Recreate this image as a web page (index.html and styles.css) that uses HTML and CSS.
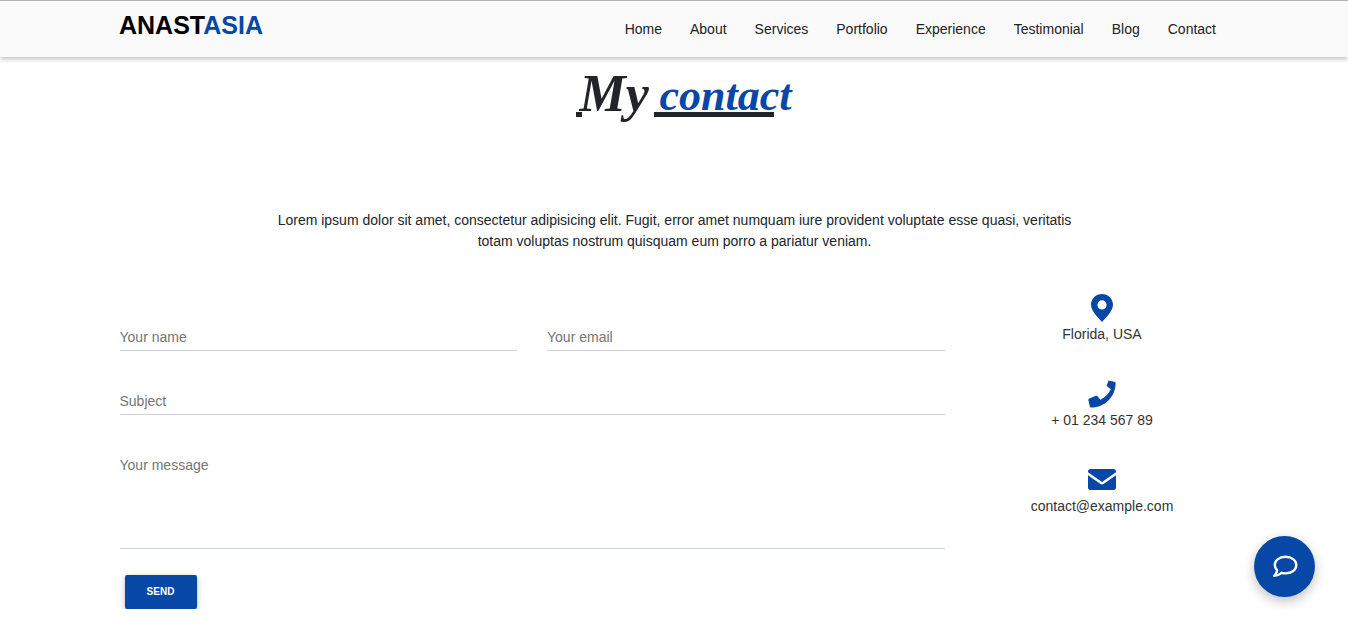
FILE: index.html
```html
<!DOCTYPE html>
<html lang="en">
<head>
    <meta charset="UTF-8">
    <meta name="viewport" content="width=device-width, initial-scale=1.0">
    <title>Contact</title>
    <link rel="stylesheet" href="styles.css">
</head>
<body>
    <header class="navbar">
        <div class="container navbar-inner">
            <a class="logo" href="#">ANAST<span>ASIA</span></a>
            <ul class="nav-list">
                <li><a href="#">Home</a></li>
                <li><a href="#">About</a></li>
                <li><a href="#">Services</a></li>
                <li><a href="#">Portfolio</a></li>
                <li><a href="#">Experience</a></li>
                <li><a href="#">Testimonial</a></li>
                <li><a href="#">Blog</a></li>
                <li><a href="#">Contact</a></li>
            </ul>
        </div>
    </header>

    <section class="contact">
        <h2 class="title"><span class="title-mark"></span><span class="title-my">My</span> <span class="title-em">contact</span></h2>
        <p class="intro">Lorem ipsum dolor sit amet, consectetur adipisicing elit. Fugit, error amet numquam iure provident voluptate esse quasi, veritatis totam voluptas nostrum quisquam eum porro a pariatur veniam.</p>

        <div class="container contact-row">
            <form class="contact-form">
                <div class="form-row">
                    <input class="field" type="text" placeholder="Your name">
                    <input class="field" type="text" placeholder="Your email">
                </div>
                <input class="field" type="text" placeholder="Subject">
                <textarea class="field field-message" placeholder="Your message"></textarea>
                <button class="btn-send" type="button">SEND</button>
            </form>

            <ul class="contact-info">
                <li>
                    <svg class="icon" width="22" height="28" viewBox="0 0 22 28"><path fill-rule="evenodd" d="M11 0C5 0 0 4.700 0 10.600 0 17 6.500 23 11 28c4.500-5 11-11 11-17.400C22 4.700 17 0 11 0zm0 6.300a4.600 4.600 0 1 1 0 9.200 4.600 4.600 0 0 1 0-9.200z"/></svg>
                    <span>Florida, USA</span>
                </li>
                <li>
                    <svg class="icon" width="28" height="28" viewBox="0 0 28 28"><path d="M20.300.4l6.100 1.400c.7.200 1.200.8 1.200 1.500C27.600 16.700 16.700 27.600 3.300 27.600c-.7 0-1.300-.5-1.500-1.200L.4 20.300c-.2-.7.200-1.400.9-1.700l6.500-2.800c.6-.2 1.300-.1 1.700.4l2.900 3.500c4.500-2.200 8.200-5.900 10.400-10.400l-3.500-2.900c-.5-.4-.7-1.100-.4-1.700l2.800-6.500c.3-.7 1-1.100 1.600-.8z"/></svg>
                    <span>+ 01 234 567 89</span>
                </li>
                <li>
                    <svg class="icon icon-mail" width="28" height="21" viewBox="0 0 28 21"><path d="M2.600 0h22.800C26.800 0 28 1.200 28 2.600v.7L14 13 0 3.300v-.7C0 1.200 1.200 0 2.600 0zM0 6.300l12.500 8.700c.9.600 2.100.6 3 0L28 6.300v12.100c0 1.400-1.200 2.600-2.600 2.600H2.600C1.200 21 0 19.800 0 18.400z"/></svg>
                    <span>contact@example.com</span>
                </li>
            </ul>
        </div>
    </section>

    <a class="chat-btn" href="#">
        <svg width="28" height="26" viewBox="0 0 26 24" fill="none" stroke="#fff" stroke-width="2.200" stroke-linejoin="round"><path d="M13.500 2.500c5.800 0 10 3.300 10 7.700s-4.200 7.700-10 7.700c-1.300 0-2.600-.2-3.700-.5-1.500 1.300-3.700 2.600-6.800 2.800 1.300-1.300 2.400-3.100 2.700-5-1.400-1.300-2.200-3-2.200-5 0-4.400 4.200-7.700 10-7.700z"/></svg>
    </a>
</body>
</html>
```

FILE: styles.css
```css
*{
    box-sizing: border-box;
}
body{
    margin: 0;
    padding-left: 1px;
    font-family: "Liberation Sans", Arial, sans-serif;
    font-size: 14px;
    line-height: 21px;
    color: #212529;
    background: #fff;
}
a{
    color: inherit;
    text-decoration: none;
}
ul{
    margin: 0;
    padding: 0;
    list-style: none;
}
.container{
    width: 1110px;
    margin: 0 auto;
}

/* top bar */
.navbar{
    height: 57px;
    margin-left: -1px;
    border-top: 1px solid #b5b5b5;
    background: #fafafa;
    box-shadow: 0 2px 5px rgba(0,0,0,.26);
}
.navbar-inner{
    display: flex;
    justify-content: space-between;
    align-items: flex-start;
}
.logo{
    margin-top: 9px;
    font-size: 25px;
    line-height: 31px;
    font-weight: bold;
    color: #000;
}
.logo span{
    color: #0747a6;
}
.nav-list{
    display: flex;
    gap: 28px;
    margin: 18px 13px 0 0;
    color: #212121;
}

/* heading */
.contact{
    padding-top: 7px;
}
.title{
    display: flex;
    align-items: flex-end;
    width: 198px;
    height: 53px;
    margin: 0 auto;
    font-family: "Liberation Serif", serif;
    font-style: italic;
    font-weight: bold;
}
.title-mark{
    flex: none;
    width: 6px;
    height: 5px;
    background: #212529;
}
.title-my{
    margin: 0 0 -7px -2px;
    font-size: 52px;
    line-height: 60px;
}
.title-em{
    flex: none;
    width: 120px;
    margin-left: auto;
    padding-left: 6px;
    border-bottom: 5px solid #212529;
    font-size: 44px;
    line-height: 32px;
    color: #0747a6;
    white-space: nowrap;
}
.intro{
    width: 810px;
    margin: 93px auto 0;
    text-align: center;
}

/* form and address column */
.contact-row{
    display: flex;
    margin-top: 26px;
}
.contact-form{
    display: flex;
    flex-direction: column;
    gap: 23px;
    flex: none;
    width: 825px;
    padding-top: 32px;
}
.form-row{
    display: flex;
    gap: 30px;
}
.field{
    display: block;
    width: 100%;
    height: 41px;
    padding: 14px 0 0;
    border: 0;
    border-bottom: 1px solid #ced4da;
    outline: 0;
    font: inherit;
    background: transparent;
    resize: none;
}
.form-row .field{
    width: 398px;
}
.field-message{
    height: 111px;
    padding-top: 17px;
}
.field::placeholder{
    color: #757575;
    opacity: 1;
}
.btn-send{
    align-self: flex-start;
    width: 72px;
    height: 34px;
    margin: 3px 0 0 5px;
    padding: 0 0 2px;
    border: 0;
    border-radius: 2px;
    background: #0747a6;
    box-shadow: 0 2px 5px rgba(0,0,0,.16), 0 2px 10px rgba(0,0,0,.12);
    font: bold 10px "Liberation Sans", sans-serif;
    color: #fff;
}
.contact-info{
    display: flex;
    flex-direction: column;
    gap: 33px;
    flex: none;
    width: 285px;
    margin-left: 15px;
    padding-top: 14px;
    color: #333;
    text-align: center;
}
.contact-info li{
    display: flex;
    flex-direction: column;
    align-items: center;
    justify-content: flex-end;
    height: 53px;
}
.icon{
    display: block;
    margin-bottom: 2px;
    fill: #0747a6;
}
.icon-mail{
    margin-bottom: 6px;
}

/* floating chat button */
.chat-btn{
    position: fixed;
    right: 33px;
    bottom: 29px;
    display: flex;
    align-items: center;
    justify-content: center;
    width: 61px;
    height: 61px;
    border-radius: 50%;
    background: #0747a6;
    box-shadow: 0 4px 12px rgba(0,0,0,.25);
}
```
